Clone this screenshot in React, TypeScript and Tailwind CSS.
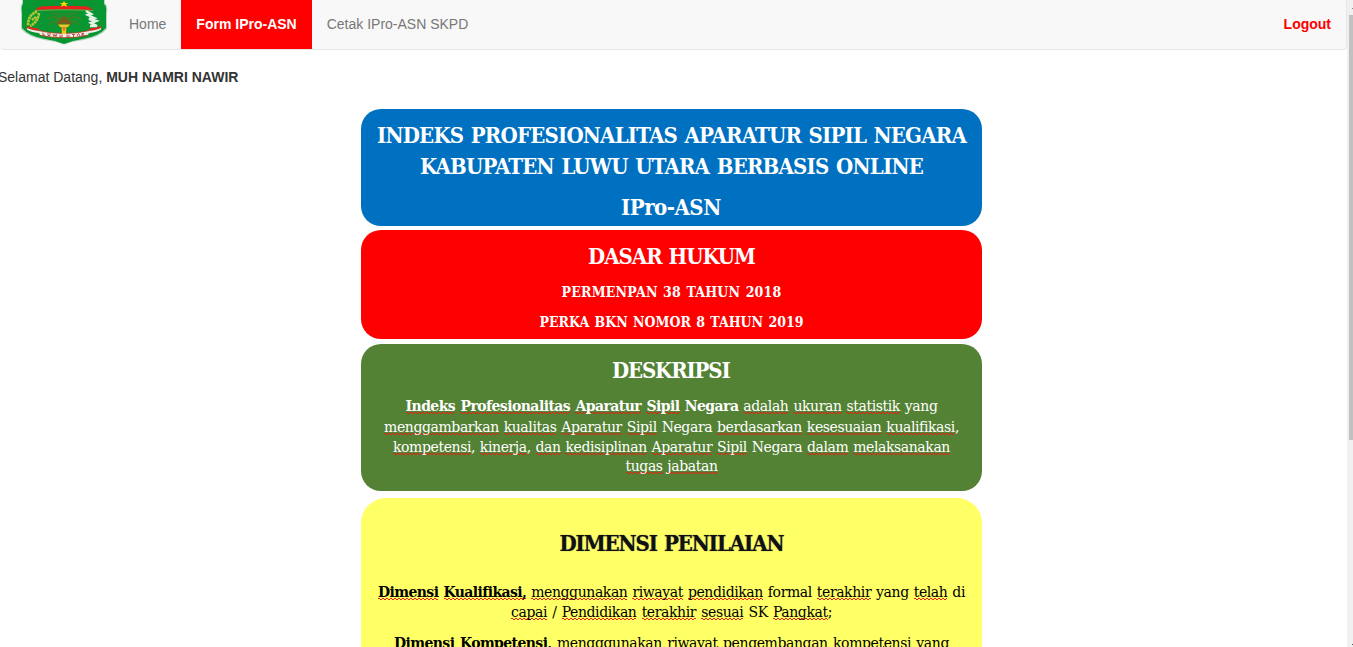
import type { ReactNode } from "react";

const heading = "text-[22px] leading-[31px] font-bold whitespace-nowrap [text-align-last:justify]";
const body = "font-['DejaVu_Serif',serif] text-[14px] leading-[20px] tracking-[-0.4px] whitespace-nowrap [text-align-last:justify]";
const law = "text-[14px] leading-[20px] font-bold whitespace-nowrap [text-align-last:justify]";

function W({ children }: { children: ReactNode }) {
  return (
    <span className="bg-[linear-gradient(90deg,#e8200f_50%,transparent_50%),linear-gradient(90deg,transparent_50%,#e8200f_50%)] bg-[length:4px_1px] bg-[position:0_calc(100%_-_1px),0_100%] bg-repeat-x">
      {children}
    </span>
  );
}

function Emblem() {
  return (
    <svg width="88" height="45" viewBox="0 0 88 45" className="block">
      <path d="M2 0H85V3Q88 5 87 12V29Q80 37 64 40Q53 41 44 44.500Q35 41 24 40Q8 37 1 29V12Q0 5 2 3Z" fill="#b5d8bf" />
      <path d="M3 0H84V4Q87 6 86 13V28Q79 36 64 38.800Q53 40.500 44 44Q35 40.500 24 38.800Q9 36 2 28V13Q1 6 3 4Z" fill="#079632" />
      <path d="M20 6.500Q44 5 68 6.500L73 10Q44 8.500 15 10Z" fill="#e8211c" />
      <path d="M15 10.500Q44 9 73 10.500" stroke="#8fae4a" strokeWidth="0.800" fill="none" />
      <path d="M44 1L45.300 3H48L46 4.500L47 7L44 5.500L41 7L42 4.500L40 3H42.700Z" fill="#ffd800" />
      <path d="M17 11.500Q8 15 8 25.500M19 13Q18 22 10 26M16 17L12 20" stroke="#b9c832" strokeWidth="2.600" strokeDasharray="2.500 0.500" fill="none" />
      <path d="M66 11L71 14L68 15L74 18L69 19L76 21L71 23L77 26L70 26" stroke="#e8f1e5" strokeWidth="2.500" fill="none" />
      <path d="M44 22Q39 11 30 14M44 22Q35 14 27 19M44 22Q34 18 29 25M44 22Q49 11 58 14M44 22Q53 14 61 19M44 22Q55 18 59 25M44 22V12" stroke="#3d8524" strokeWidth="1.800" fill="none" />
      <path d="M36 24L41 19L44 16L47 19L53 24L48 25L44 23L40 25Z" fill="#7a5c1c" />
      <path d="M7 26Q12 28 19 28.500V31Q11 30 7 28Z" fill="#e5261d" />
      <path d="M7 28Q11 30 19 31V33Q11 32 7 29.500Z" fill="#f5efed" />
      <path d="M81 26Q76 28 69 28.500V31Q77 30 81 28Z" fill="#e5261d" />
      <path d="M81 28Q77 30 69 31V33Q77 32 81 29.500Z" fill="#f5efed" />
      <path d="M18 30.500Q30 33.500 44 33.500Q58 33.500 70 30.500L68 35Q57 37.500 44 37.500Q31 37.500 20 35Z" fill="#f2eee9" />
      <path d="M18 30.500Q30 33.500 44 33.500Q58 33.500 70 30.500" stroke="#d7291f" strokeWidth="0.700" fill="none" />
      <path d="M20 35.200Q31 37.800 44 37.800Q57 37.800 68 35.200" stroke="#d7291f" strokeWidth="0.700" fill="none" />
      <path d="M23 32.500V35H25M28 33V35.500H30V33M33 34L34 36.500L35 34.500L36 36.500L37 34M40 34.500V37H42V34.500M47 34.500V37H49V34.500M52 34.500H55M53.500 34.500V37M57 36L58.500 33.500L60 36M62 36V33.500H64L62 34.500L65 36" stroke="#b0453e" strokeWidth="0.900" fill="none" />
      <path d="M38 24.500H50L48 27H46.500L46 34H42L41.500 27H40Z" fill="#f4c51b" />
      <path d="M42 27H46L45 31H43Z" fill="#e0861e" />
    </svg>
  );
}

export default function App() {
  return (
    <div className="flex h-[647px] w-[1353px] overflow-hidden bg-white font-['Liberation_Sans',sans-serif] text-[14px] text-[#333]">
      <div className="flex h-full w-[1347px] flex-col overflow-hidden">
        <nav className="flex h-[50px] shrink-0 rounded-b-[4px] border-r border-b border-[#e7e7e7] bg-[#f8f8f8] leading-[20px] text-[#777]">
          <div className="w-[114px] pl-[20px]"><Emblem /></div>
          <a className="px-[15px] pt-[14px]">Home</a>
          <a className="h-[49px] bg-[#f00] px-[15px] pt-[14px] font-bold text-white">Form IPro-ASN</a>
          <a className="px-[15px] pt-[14px]">Cetak IPro-ASN SKPD</a>
          <a className="ml-auto px-[15px] pt-[14px] font-bold text-[#f00]">Logout</a>
        </nav>
        <p className="-ml-[2px] mt-[17px] leading-[20px]">Selamat Datang, <b>MUH NAMRI NAWIR</b></p>
        <main className="ml-[361px] mt-[22px] flex w-[621px] shrink-0 flex-col font-['DejaVu_Serif_Condensed','DejaVu_Serif',serif] text-white">
          <section className="flex h-[117px] flex-col items-center rounded-[20px] bg-[#0070c0] pt-[11px]">
            <h1 className={`${heading} w-[589px] tracking-[-0.8px]`}>INDEKS PROFESIONALITAS APARATUR SIPIL NEGARA</h1>
            <h1 className={`${heading} w-[503px] tracking-[-0.8px]`}>KABUPATEN LUWU UTARA BERBASIS ONLINE</h1>
            <h1 className={`${heading} mt-[10px] w-[101px] tracking-[-0.5px]`}>IPro-ASN</h1>
          </section>
          <section className="mt-[4px] flex h-[109px] flex-col items-center rounded-[20px] bg-[#f00] pt-[11px]">
            <h2 className={`${heading} w-[167px] tracking-[-1px]`}>DASAR HUKUM</h2>
            <p className={`${law} mt-[10px] w-[220px] tracking-[0.2px]`}>PERMENPAN 38 TAHUN 2018</p>
            <p className={`${law} mt-[10px] w-[264px]`}>PERKA BKN NOMOR 8 TAHUN 2019</p>
          </section>
          <section className="mt-[5px] flex h-[147px] flex-col items-center rounded-[20px] bg-[#548235] pt-[11px]">
            <h2 className={`${heading} w-[119px] tracking-[-1.15px]`}>DESKRIPSI</h2>
            <p className={`${body} mt-[10px] w-[532px]`}><b className="tracking-[-0.55px]"><W>Indeks</W> <W>Profesionalitas</W> <W>Aparatur</W> <W>Sipil</W> Negara</b> <W>adalah</W> <W>ukuran</W> <W>statistik</W> yang</p>
            <p className={`${body} mt-px w-[575px]`}><W>menggambarkan</W> <W>kualitas</W> <W>Aparatur</W> <W>Sipil</W> Negara <W>berdasarkan</W> <W>kesesuaian</W> <W>kualifikasi</W>,</p>
            <p className={`${body} w-[557px]`}><W>kompetensi</W>, <W>kinerja</W>, <W>dan</W> <W>kedisiplinan</W> <W>Aparatur</W> <W>Sipil</W> Negara <W>dalam</W> <W>melaksanakan</W></p>
            <p className={`${body} -mt-px w-[92px]`}><W>tugas</W> <W>jabatan</W></p>
          </section>
          <section className="mt-[7px] flex h-[300px] flex-col items-center rounded-[25px] bg-[#ff6] pt-[30px] text-black">
            <h2 className={`${heading} w-[224px] tracking-[-1.1px] text-[#111] [text-shadow:0_0_1px_#666]`}>DIMENSI PENILAIAN</h2>
            <p className={`${body} mt-[23px] w-[587px]`}><b className="tracking-[-0.6px]"><W>Dimensi</W> <W>Kualifikasi,</W></b> <W>menggunakan</W> <W>riwayat</W> <W>pendidikan</W> formal <W>terakhir</W> yang <W>telah</W> di</p>
            <p className={`${body} w-[321px]`}><W>capai</W> / <W>Pendidikan</W> <W>terakhir</W> <W>sesuai</W> SK <W>Pangkat</W>;</p>
            <p className={`${body} mt-[11px] w-[555px]`}><b className="tracking-[-0.6px]"><W>Dimensi</W> <W>Kompetensi,</W></b> <W>mengggunakan</W> <W>riwayat</W> <W>pengembangan</W> <W>kompetensi</W> yang</p>
          </section>
        </main>
      </div>
      <div className="flex w-[6px] flex-col bg-[#f0f0f0] pl-[2px]">
        <div className="mt-[8px] ml-[3px] h-px w-px bg-[#888]" />
        <div className="mt-[6px] h-[425px] bg-[#c1c1c1]" />
        <div className="mt-[204px] ml-[3px] h-px w-px bg-[#555]" />
      </div>
    </div>
  );
}
